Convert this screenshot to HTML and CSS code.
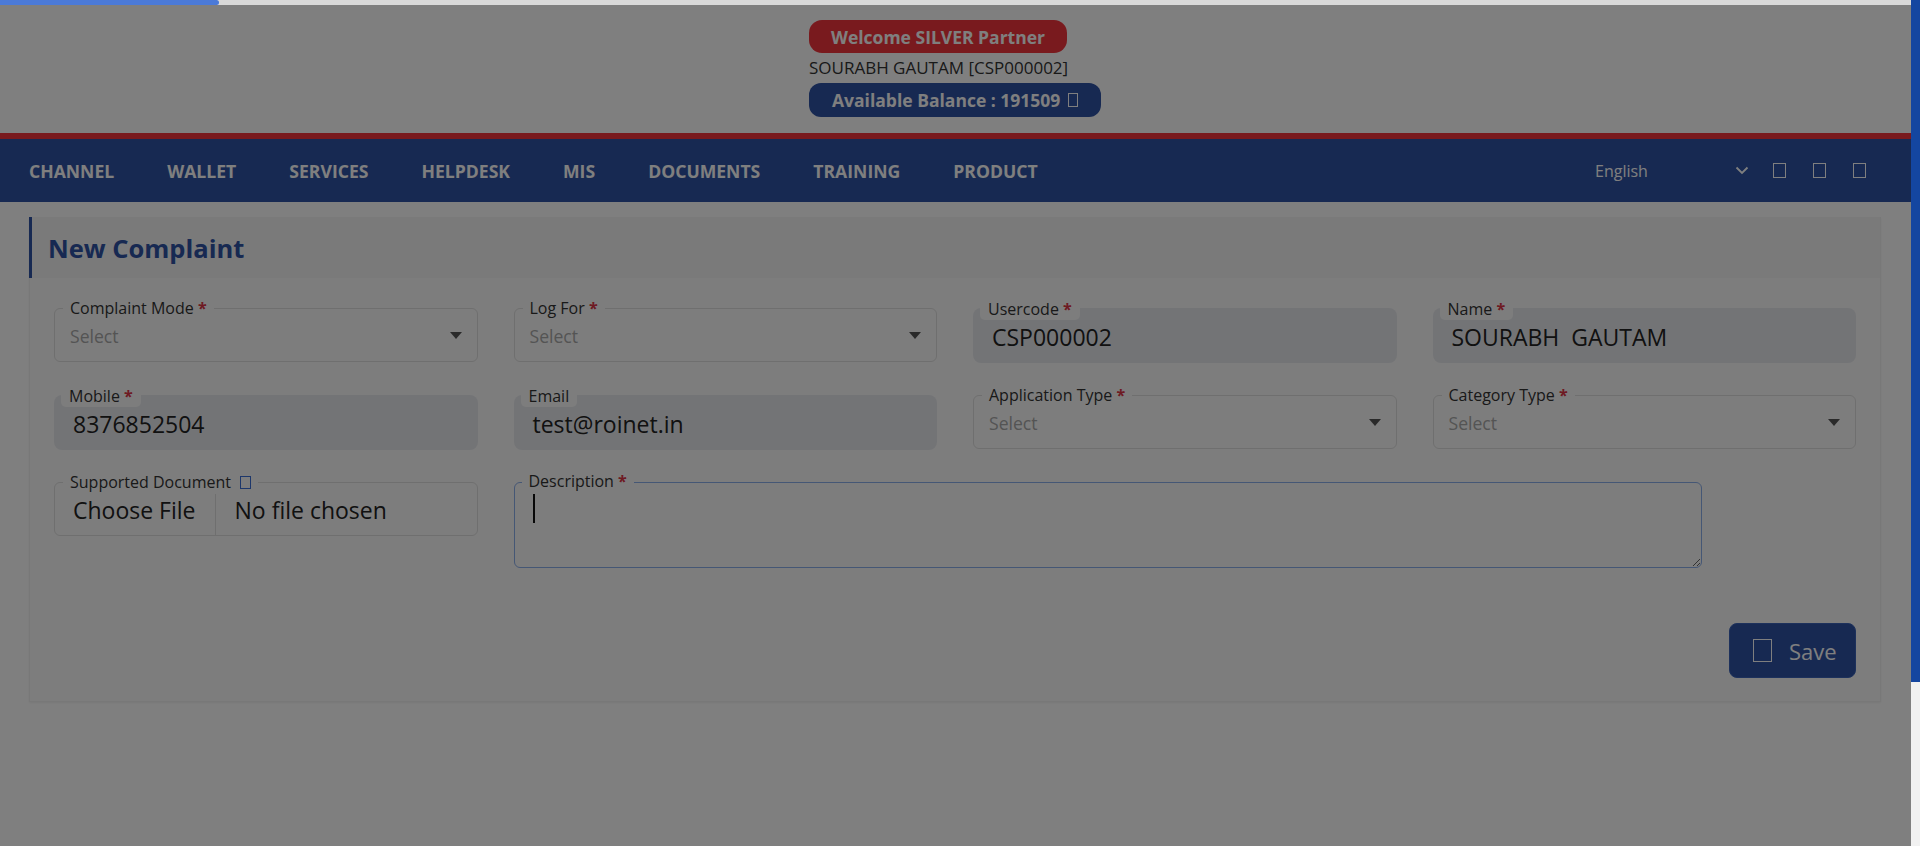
FILE: index.html
```html
<!DOCTYPE html>
<html>
<head>
<meta charset="utf-8">
<title>New Complaint</title>
<link rel="stylesheet" href="styles.css">
</head>
<body>
<div class="app">
  <div class="page">
    <header class="topbar">
      <div class="userbox">
        <div class="pill pill-red">Welcome SILVER Partner</div>
        <div class="username">SOURABH GAUTAM [CSP000002]</div>
        <div class="pill pill-navy">Available Balance : 191509 <span class="tofu tofu-sm"></span></div>
      </div>
    </header>
    <div class="redline"></div>
    <nav class="navbar">
      <ul class="menu">
        <li>CHANNEL</li>
        <li>WALLET</li>
        <li>SERVICES</li>
        <li>HELPDESK</li>
        <li>MIS</li>
        <li>DOCUMENTS</li>
        <li>TRAINING</li>
        <li>PRODUCT</li>
      </ul>
      <div class="nav-right">
        <div class="lang">
          <span>English</span>
          <svg class="chev" width="14" height="9" viewBox="0 0 14 9"><polyline points="1.5,1.5 7,7 12.5,1.5" fill="none" stroke="#fff" stroke-width="1.8"/></svg>
        </div>
        <span class="tofu tofu-nav"></span>
        <span class="tofu tofu-nav"></span>
        <span class="tofu tofu-nav"></span>
      </div>
    </nav>
    <main class="content">
      <section class="card">
        <div class="card-head"><h2>New Complaint</h2></div>
        <div class="card-body">
          <div class="grid">
            <div class="field outline">
              <span class="lbl">Complaint Mode <b class="req">*</b></span>
              <div class="select"><span class="ph">Select</span><span class="caret-down"></span></div>
            </div>
            <div class="field outline">
              <span class="lbl">Log For <b class="req">*</b></span>
              <div class="select"><span class="ph">Select</span><span class="caret-down"></span></div>
            </div>
            <div class="field filled">
              <span class="lbl lbl-box">Usercode <b class="req">*</b></span>
              <div class="value">CSP000002</div>
            </div>
            <div class="field filled">
              <span class="lbl lbl-box">Name <b class="req">*</b></span>
              <div class="value">SOURABH&nbsp; GAUTAM</div>
            </div>

            <div class="field filled">
              <span class="lbl lbl-box">Mobile <b class="req">*</b></span>
              <div class="value">8376852504</div>
            </div>
            <div class="field filled">
              <span class="lbl lbl-box">Email</span>
              <div class="value">test@roinet.in</div>
            </div>
            <div class="field outline">
              <span class="lbl">Application Type <b class="req">*</b></span>
              <div class="select"><span class="ph">Select</span><span class="caret-down"></span></div>
            </div>
            <div class="field outline">
              <span class="lbl">Category Type <b class="req">*</b></span>
              <div class="select"><span class="ph">Select</span><span class="caret-down"></span></div>
            </div>

            <div class="field outline file">
              <span class="lbl">Supported Document <span class="tofu tofu-info"></span></span>
              <div class="file-inner">
                <span class="file-btn">Choose File</span>
                <span class="file-name">No file chosen</span>
              </div>
            </div>
            <div class="field desc">
              <textarea class="textarea"></textarea>
              <span class="lbl">Description <b class="req">*</b></span>
              <span class="text-caret"></span>
            </div>
          </div>
          <div class="actions">
            <button class="btn-save"><span class="tofu tofu-btn"></span><span>Save</span></button>
          </div>
        </div>
      </section>
    </main>
  </div>
  <div class="scrollbar"><div class="thumb"></div></div>
</div>
<div class="backdrop"></div>
<div class="progress"><div class="progress-bar"></div></div>
</body>
</html>
```

FILE: styles.css
```css
* { box-sizing: border-box; }
html, body { margin: 0; padding: 0; height: 846px; overflow: hidden; }
body { font-family: "Open Sans", "Noto Sans", sans-serif; color: #333; background: #fff; }

.app { display: flex; height: 846px; }
.page { flex: 1; min-width: 0; background: #fff; }

.scrollbar { width: 9px; background: #f1f1f1; }
.thumb { height: 682px; background: #1446a0; }

/* header */
.topbar { height: 133px; display: flex; justify-content: center; padding-top: 20px; }
.userbox { display: flex; flex-direction: column; align-items: flex-start; width: 293px; }
.pill { color: #fff; font-weight: 700; white-space: nowrap; display: flex; align-items: center; }
.pill-red { background: #f2353c; height: 33px; padding: 0 22px; border-radius: 13px; font-size: 17.5px; }
.pill-navy { background: #2e52a4; height: 34px; padding: 0 23px; border-radius: 12px; font-size: 17.5px; gap: 8px; }
.username { height: 30px; line-height: 30px; font-size: 17px; color: #333; }

.tofu { display: inline-block; border: 1px solid currentColor; }
.tofu-sm { width: 10px; height: 14px; }
.tofu-nav { width: 13px; height: 15px; color: #fff; }
.tofu-info { width: 11px; height: 13px; color: #3b6fd6; margin-left: 5px; vertical-align: -1px; }
.tofu-btn { width: 19px; height: 23px; color: #fff; border-width: 1.5px; }

.redline { height: 6px; background: #f2353c; }

/* nav */
.navbar { height: 63px; background: #2e52a4; display: flex; align-items: center; justify-content: space-between; padding: 0 45px 0 29px; }
.menu { list-style: none; margin: 0; padding: 0; display: flex; gap: 53px; }
.menu li { color: #fff; font-weight: 700; font-size: 17.6px; }
.nav-right { display: flex; align-items: center; gap: 27px; }
.lang { width: 154px; display: flex; align-items: center; justify-content: space-between; color: #fff; font-size: 16px; margin-right: -3px; }
.chev { display: block; }

/* content */
.content { padding: 15px 30px 0 29px; }
.card { background: #fbfbfb; border: 1px solid #f0f0f0; box-shadow: 0 1px 2px rgba(0,0,0,0.06); }
.card-head { height: 61px; background: #f4f4f4; border-left: 3px solid #2e52a4; margin: -1px 0 0 -1px; display: flex; align-items: center; padding-left: 16px; }
.card-head h2 { margin: 0; font-size: 25.5px; font-weight: 700; color: #2e52a4; }
.card-body { padding: 30px 24px 23px 24px; }

.grid { display: grid; grid-template-columns: repeat(4, 1fr); column-gap: 36px; row-gap: 32px; }

.field { position: relative; height: 54px; }
.field.outline { border: 1px solid #dedede; border-radius: 6px; }
.field.filled { background: #e7e9ed; border-radius: 8px; height: 55px; }
.lbl { position: absolute; top: -12px; left: 8px; padding: 0 7px; background: #fbfbfb; font-size: 16px; line-height: 22px; color: #333; white-space: nowrap; }
.lbl-box { top: -9px; left: 7px; padding: 0 8px; border-radius: 5px; line-height: 21px; }
.req { color: #dc3545; font-weight: 700; }

.select { height: 100%; display: flex; align-items: center; justify-content: space-between; padding: 1px 15px 0 15px; }
.ph { font-size: 17.6px; color: #a8a8a8; }
.caret-down { width: 0; height: 0; border-left: 6px solid transparent; border-right: 6px solid transparent; border-top: 7px solid #555; }

.value { height: 100%; display: flex; align-items: center; padding: 3px 0 0 19px; font-size: 23px; color: #222; }

.file-inner { display: flex; height: 100%; font-size: 23px; color: #222; }
.file-btn { margin-top: 11px; padding: 2px 19px 0 18px; border-right: 1px solid #dedede; line-height: 28px; }
.file-name { padding: 13px 19px 0 19px; line-height: 28px; }

.desc { grid-column: 2 / span 3; width: 1188px; height: 86px; }
.textarea { display: block; width: 100%; height: 100%; border: 1px solid #8aaeea; border-radius: 6px; background: #fbfbfb; resize: vertical; font-family: inherit; font-size: 18px; outline: none; padding: 10px 16px; }
.text-caret { position: absolute; left: 19px; top: 12px; width: 2px; height: 29px; background: #111; }

.actions { display: flex; justify-content: flex-end; margin-top: 55px; }
.btn-save { height: 55px; width: 127px; display: flex; align-items: center; gap: 17px; padding: 0 0 0 23px; border: 1px solid #3a63b8; border-radius: 8px; background: #2e52a4; color: #fff; font-family: inherit; font-size: 22px; }

/* overlays */
.backdrop { position: fixed; z-index: 100; top: 0; left: 0; bottom: 0; right: 9px; background: rgba(0,0,0,0.5); }
.progress { position: fixed; z-index: 101; top: 0; left: 0; right: 9px; height: 5px; background: #d9d9d9; }
.progress-bar { width: 219px; height: 5px; background: #4b7ad8; border-radius: 0 3px 3px 0; }
```
